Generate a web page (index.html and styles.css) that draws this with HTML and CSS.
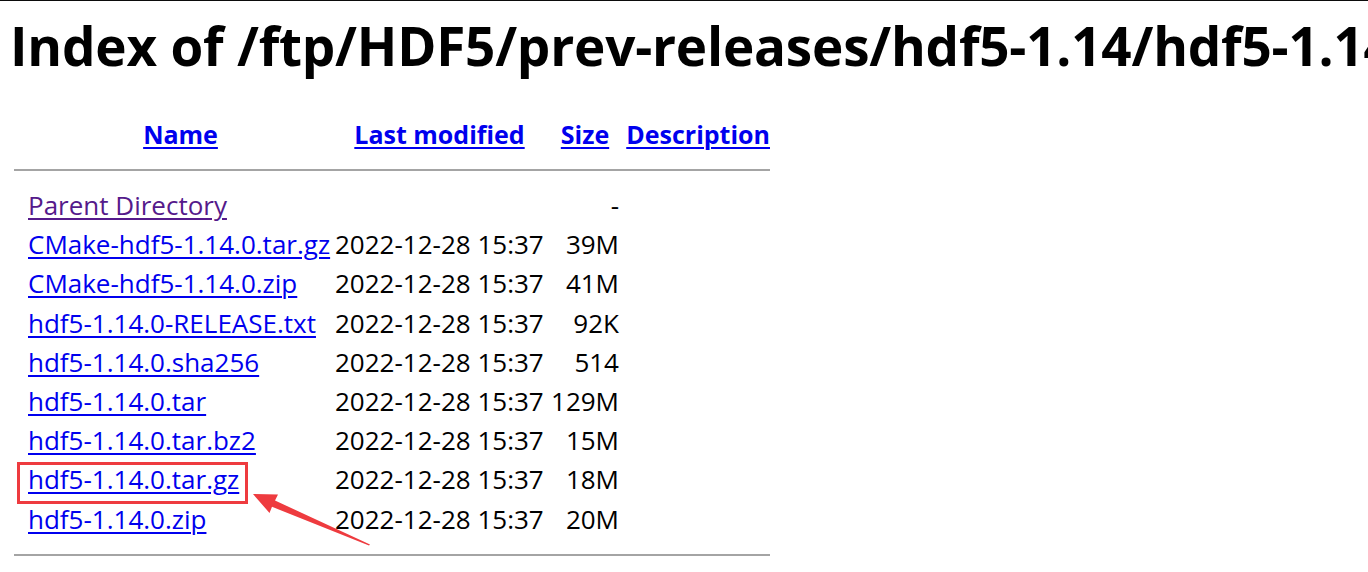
FILE: index.html
```html
<!DOCTYPE html>
<html>
<head>
<meta charset="utf-8">
<title>Index of /ftp/HDF5/prev-releases/hdf5-1.14/hdf5-1.14.0</title>
<link rel="stylesheet" href="styles.css">
</head>
<body>
<div class="topline"></div>
<h1 class="title">Index of /ftp/HDF5/prev-releases/hdf5-1.14/hdf5-1.14.0</h1>
<table class="listing">
  <colgroup>
    <col class="c-icon"><col class="c-name"><col class="c-date"><col class="c-size"><col class="c-desc">
  </colgroup>
  <thead>
    <tr class="head">
      <th></th>
      <th><a href="#">Name</a></th>
      <th><a href="#">Last modified</a></th>
      <th class="h-size"><a href="#">Size</a></th>
      <th class="h-desc"><a href="#">Description</a></th>
    </tr>
    <tr class="rule"><th colspan="5"><div class="hr"></div></th></tr>
  </thead>
  <tbody>
    <tr><td></td><td><a class="visited" href="#">Parent Directory</a></td><td></td><td class="size">-</td><td></td></tr>
    <tr><td></td><td><a href="#">CMake-hdf5-1.14.0.tar.gz</a></td><td class="date">2022-12-28 15:37</td><td class="size">39M</td><td></td></tr>
    <tr><td></td><td><a href="#">CMake-hdf5-1.14.0.zip</a></td><td class="date">2022-12-28 15:37</td><td class="size">41M</td><td></td></tr>
    <tr><td></td><td><a href="#">hdf5-1.14.0-RELEASE.txt</a></td><td class="date">2022-12-28 15:37</td><td class="size">92K</td><td></td></tr>
    <tr><td></td><td><a href="#">hdf5-1.14.0.sha256</a></td><td class="date">2022-12-28 15:37</td><td class="size">514</td><td></td></tr>
    <tr><td></td><td><a href="#">hdf5-1.14.0.tar</a></td><td class="date">2022-12-28 15:37</td><td class="size">129M</td><td></td></tr>
    <tr><td></td><td><a href="#">hdf5-1.14.0.tar.bz2</a></td><td class="date">2022-12-28 15:37</td><td class="size">15M</td><td></td></tr>
    <tr><td></td><td><a href="#">hdf5-1.14.0.tar.gz</a></td><td class="date">2022-12-28 15:37</td><td class="size">18M</td><td></td></tr>
    <tr><td></td><td><a href="#">hdf5-1.14.0.zip</a></td><td class="date">2022-12-28 15:37</td><td class="size">20M</td><td></td></tr>
  </tbody>
  <tfoot>
    <tr class="rule"><th colspan="5"><div class="hr"></div></th></tr>
  </tfoot>
</table>
<div class="mark-box"></div>
<svg class="mark-arrow" width="1368" height="572" viewBox="0 0 1368 572">
  <polygon points="253,494 278,494.5 275,500.5 370,544.5 369,545.5 272,506.8 269.5,513" fill="#ee3b3f"/>
</svg>
</body>
</html>
```
FILE: styles.css
```css
html, body {
  margin: 0;
  padding: 0;
  background: #fff;
  overflow: hidden;
}
body {
  font-family: "Open Sans", "Noto Sans", sans-serif;
  color: #000;
  width: 1368px;
  height: 572px;
  position: relative;
}
.topline {
  height: 1px;
  background: #0b0b0b;
}
.title {
  margin: 7px 0 0 10px;
  font-size: 53px;
  font-weight: 700;
  line-height: 76px;
  height: 76px;
  white-space: nowrap;
  letter-spacing: -0.2px;
}
.listing {
  margin: 31px 0 0 14px;
  border-collapse: collapse;
  border-spacing: 0;
  table-layout: fixed;
  width: 756px;
  font-size: 26px;
}
.c-icon { width: 14px; }
.c-name { width: 305px; }
.c-date { width: 213px; }
.c-size { width: 76px; }
.c-desc { width: 148px; }
.listing th, .listing td {
  padding: 0;
  white-space: nowrap;
}
.head th {
  height: 39px;
  line-height: 39px;
  font-size: 25px;
  font-weight: 700;
  text-align: center;
}
.head .h-size { padding-left: 2px; }
.head .h-desc { text-align: right; }
.rule th {
  height: 32px;
  vertical-align: middle;
}
.hr {
  height: 2px;
  background: #a4a4a4;
}
.listing tbody td {
  height: 39.2px;
  line-height: 39.2px;
}
.date { padding-left: 2px !important; }
.size {
  text-align: right;
  padding-right: 3px !important;
}
a {
  color: #0000ee;
  text-decoration: underline;
  text-decoration-thickness: 2px;
  text-underline-offset: 3px;
}
a.visited { color: #551a8b; }
.mark-box {
  position: absolute;
  left: 17px;
  top: 462px;
  width: 225px;
  height: 36px;
  border: 3px solid #ee3b3f;
}
.mark-arrow {
  position: absolute;
  left: 0;
  top: 0;
  pointer-events: none;
}
```
